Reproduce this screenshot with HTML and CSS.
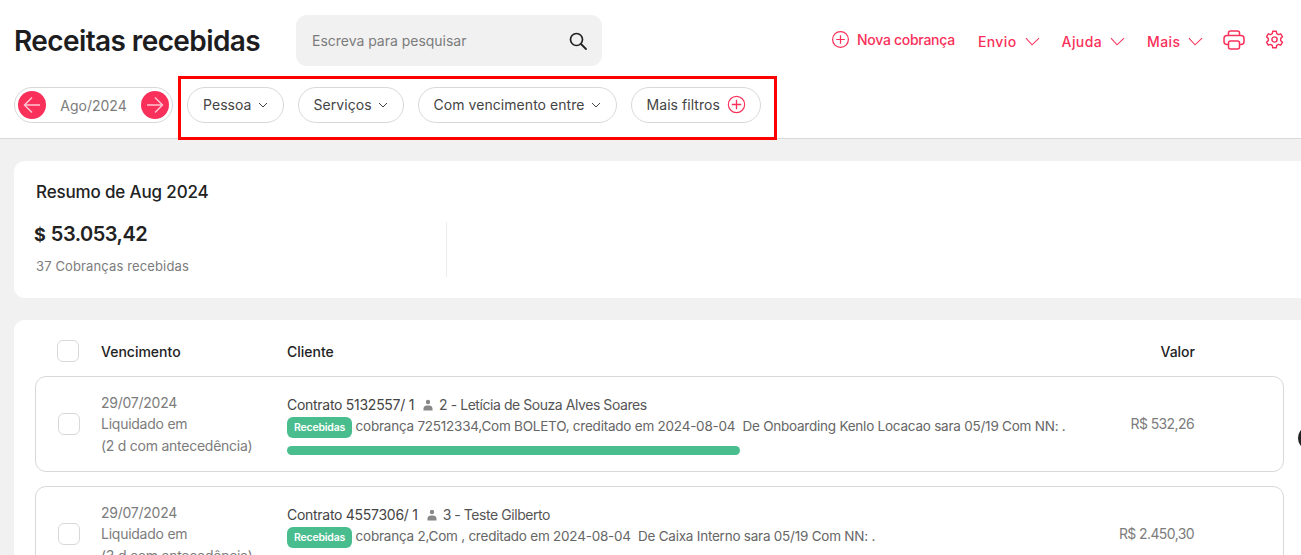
FILE: index.html
```html
<!DOCTYPE html>
<html lang="pt-BR">
<head>
<meta charset="utf-8">
<title>Receitas recebidas</title>
<link rel="stylesheet" href="styles.css">
</head>
<body>
<header class="top">
  <div class="top-row">
    <h1 class="title">Receitas recebidas</h1>
    <div class="search">
      <span class="search-text">Escreva para pesquisar</span>
      <svg class="search-icon" viewBox="0 0 20 20" width="20" height="20"><circle cx="8.500" cy="8.500" r="6" fill="none" stroke="#222" stroke-width="1.700"/><path d="M13 13l5 5" stroke="#222" stroke-width="1.800" stroke-linecap="round"/></svg>
    </div>
    <nav class="nav">
      <a class="nav-new">
        <svg viewBox="0 0 20 20" width="19" height="19"><circle cx="10" cy="10" r="8.300" fill="none" stroke="#f9305a" stroke-width="1.300"/><path d="M10 5.500v9M5.500 10h9" stroke="#f9305a" stroke-width="1.300"/></svg>
        <span class="nav-new-text">Nova cobrança</span>
      </a>
      <a class="nav-item">Envio <svg viewBox="0 0 16 9" width="15" height="9"><path d="M1 1l6.500 7L15 1" fill="none" stroke="#f9305a" stroke-width="1.100"/></svg></a>
      <a class="nav-item">Ajuda <svg viewBox="0 0 16 9" width="15" height="9"><path d="M1 1l6.500 7L15 1" fill="none" stroke="#f9305a" stroke-width="1.100"/></svg></a>
      <a class="nav-item">Mais <svg viewBox="0 0 16 9" width="15" height="9"><path d="M1 1l6.500 7L15 1" fill="none" stroke="#f9305a" stroke-width="1.100"/></svg></a>
      <svg class="nav-print" viewBox="0 0 22 20" width="22" height="20"><path d="M5.500 5.500V3a2 2 0 0 1 2-2h7a2 2 0 0 1 2 2v2.500" fill="none" stroke="#f9305a" stroke-width="1.500"/><path d="M5.500 14.500H4a3 3 0 0 1-3-3V8.500a3 3 0 0 1 3-3h14a3 3 0 0 1 3 3v3a3 3 0 0 1-3 3h-1.500" fill="none" stroke="#f9305a" stroke-width="1.500"/><rect x="5.500" y="11" width="11" height="8" rx="2" fill="none" stroke="#f9305a" stroke-width="1.500"/></svg>
      <svg class="nav-gear" viewBox="0 0 24 24" width="19" height="19" fill="none" stroke="#f9305a" stroke-width="1.800" stroke-linejoin="round"><path d="M9.800 1.500h4.400l.6 3 2.200 1.300 2.900-1 2.200 3.800-2.300 2v2.800l2.300 2-2.200 3.800-2.900-1-2.200 1.300-.6 3H9.800l-.6-3L7 18.200l-2.900 1-2.200-3.800 2.300-2v-2.800l-2.300-2 2.200-3.800 2.900 1 2.200-1.300z"/><circle cx="12" cy="12" r="3.300"/></svg>
    </nav>
  </div>
  <div class="filter-row">
    <div class="month">
      <span class="month-btn"><svg viewBox="0 0 20 20" width="20" height="20"><path d="M18 10H2.500M10 2.500L2.500 10l7.500 7.500" fill="none" stroke="#ffc4d0" stroke-width="1.500"/></svg></span>
      <span class="month-label">Ago/2024</span>
      <span class="month-btn"><svg viewBox="0 0 20 20" width="20" height="20"><path d="M2 10h15.500M10 2.500l7.500 7.500-7.500 7.500" fill="none" stroke="#ffc4d0" stroke-width="1.500"/></svg></span>
    </div>
    <div class="chips">
      <button class="chip">Pessoa <svg viewBox="0 0 10 6" width="10" height="6"><path d="M1 1l4 4 4-4" fill="none" stroke="#444" stroke-width="1"/></svg></button>
      <button class="chip">Serviços <svg viewBox="0 0 10 6" width="10" height="6"><path d="M1 1l4 4 4-4" fill="none" stroke="#444" stroke-width="1"/></svg></button>
      <button class="chip">Com vencimento entre <svg viewBox="0 0 10 6" width="10" height="6"><path d="M1 1l4 4 4-4" fill="none" stroke="#444" stroke-width="1"/></svg></button>
      <button class="chip chip-more">Mais filtros <svg viewBox="0 0 20 20" width="19" height="19"><circle cx="10" cy="10" r="8.600" fill="none" stroke="#f9305a" stroke-width="1.200"/><path d="M10 5v10M5 10h10" stroke="#f9305a" stroke-width="1.400"/></svg></button>
    </div>
  </div>
  <div class="highlight"></div>
</header>

<main class="content">
  <section class="summary">
    <h2 class="summary-title">Resumo de Aug 2024</h2>
    <div class="summary-body">
      <div class="summary-main">
        <div class="amount"><span class="amount-sign">$</span> 53.053,42</div>
        <div class="amount-sub">37 Cobranças recebidas</div>
      </div>
    </div>
  </section>

  <section class="list">
    <div class="list-head">
      <span class="check check-head"></span>
      <span class="col-date">Vencimento</span>
      <span class="col-client">Cliente</span>
      <span class="col-value">Valor</span>
    </div>
    <article class="row">
      <span class="check"></span>
      <div class="col-date date-lines"><p>29/07/2024</p><p>Liquidado em</p><p>(2 d com antecedência)</p></div>
      <div class="col-client">
        <div class="contract">Contrato 5132557/ 1<svg class="person" viewBox="0 0 10 12" width="10" height="12"><circle cx="5" cy="3" r="2.200" fill="#888"/><path d="M0.500 11.500V9a3 3 0 0 1 3-2.500h3A3 3 0 0 1 9.500 9v2.500z" fill="#888"/></svg><span class="contract-name">2 - Letícia de Souza Alves Soares</span></div>
        <div class="desc"><span class="tag">Recebidas</span> cobrança 72512334,Com BOLETO, creditado em 2024-08-04&nbsp; De Onboarding Kenlo Locacao sara 05/19 Com NN: .</div>
        <div class="bar"></div>
      </div>
      <div class="col-value value">R$ 532,26</div>
    </article>
    <article class="row">
      <span class="check"></span>
      <div class="col-date date-lines"><p>29/07/2024</p><p>Liquidado em</p><p>(3 d com antecedência)</p></div>
      <div class="col-client">
        <div class="contract">Contrato 4557306/ 1<svg class="person" viewBox="0 0 10 12" width="10" height="12"><circle cx="5" cy="3" r="2.200" fill="#888"/><path d="M0.500 11.500V9a3 3 0 0 1 3-2.500h3A3 3 0 0 1 9.500 9v2.500z" fill="#888"/></svg><span class="contract-name">3 - Teste Gilberto</span></div>
        <div class="desc"><span class="tag">Recebidas</span> cobrança 2,Com , creditado em 2024-08-04&nbsp; De Caixa Interno sara 05/19 Com NN: .</div>
        <div class="bar bar-hidden"></div>
      </div>
      <div class="col-value value">R$ 2.450,30</div>
    </article>
    <span class="edge-dot"></span>
  </section>
</main>
</body>
</html>
```
FILE: styles.css
```css
* { box-sizing: border-box; }
html, body { margin: 0; height: 555px; overflow: hidden; }
body { font-family: Inter, "Noto Sans", sans-serif; background: #f1f1f1; color: #222; width: 1301px; }

.top { position: relative; height: 139px; background: #fff; border-bottom: 1px solid #d8d8d8; padding: 15px 0 0 14px; }
.top-row { display: flex; align-items: center; height: 51px; }
.title { margin: 0; width: 282px; flex: none; font-size: 28px; font-weight: 600; letter-spacing: -.6px; color: #1d1d1f; white-space: nowrap; }
.search { width: 306px; height: 51px; flex: none; border-radius: 11px; background: #f1f1f1; display: flex; align-items: center; justify-content: space-between; padding: 0 14px 0 16px; }
.search-text { font-size: 14px; color: #7c7c7c; letter-spacing: -.02px; }
.nav { margin-left: 229px; display: flex; align-items: center; color: #f9305a; font-size: 14px; font-weight: 500; }
.nav a { display: flex; align-items: center; }
.nav-new { gap: 7px; margin-right: 23px; margin-top: -2px; }
.nav-new-text { font-size: 14px; letter-spacing: -.28px; }
.nav-item { gap: 8px; margin-right: 22px; letter-spacing: .4px; margin-top: 1px; }
.nav-print { margin-right: 20px; margin-left: -2px; margin-top: -2px; }
.nav-gear { margin-top: -2px; }

.filter-row { display: flex; align-items: center; margin-top: 21px; gap: 14px; }
.month { width: 159px; height: 36px; flex: none; border: 1px solid #d8d8d8; border-radius: 18px; display: flex; align-items: center; justify-content: space-between; padding: 0 3px 0 3px; }
.month-btn { width: 28px; height: 28px; border-radius: 50%; background: #f9305a; display: flex; align-items: center; justify-content: center; }
.month-label { font-size: 14px; color: #7c7c7c; }
.chips { display: flex; gap: 14px; }
.chip { height: 36px; border: 1px solid #d8d8d8; border-radius: 18px; background: #fff; padding: 0 15px 1px; display: flex; align-items: center; gap: 6px; font: 400 14px Inter, sans-serif; color: #444; letter-spacing: .05px; white-space: nowrap; }
.chip-more { padding-right: 14px; gap: 7px; }
.highlight { position: absolute; left: 178px; top: 76px; width: 599px; height: 64px; border: 3px solid #f00; }

.content { padding: 22px 0 0 14px; }
.summary { height: 137px; background: #fff; border-radius: 11px 0 0 11px; padding: 20px 0 0 22px; }
.summary-title { margin: 0; font-size: 17px; line-height: 22px; font-weight: 500; color: #222; letter-spacing: -.15px; }
.summary-body { margin-top: 19px; display: flex; }
.summary-main { width: 411px; height: 55px; border-right: 1px solid #ececec; }
.amount { font-size: 20px; line-height: 26px; font-weight: 600; letter-spacing: -.5px; margin-left: -2px; margin-top: -1px; color: #222; }
.amount-sign { font-size: 18px; font-weight: 700; margin-right: 1px; }
.amount-sub { margin-top: 10px; font-size: 13px; color: #7c7c7c; letter-spacing: .13px; }

.list { position: relative; margin-top: 22px; height: 300px; background: #fff; border-radius: 11px 0 0 0; padding-left: 21px; }
.list-head { display: flex; align-items: center; height: 56px; padding-top: 6px; font-size: 14px; font-weight: 500; color: #222; }
.check { flex: none; width: 22px; height: 22px; margin-left: 22px; border: 1px solid #d8d8d8; border-radius: 6px; background: #fff; }
.col-date { width: 186px; margin-left: 22px; flex: none; }
.col-client { flex: 1; min-width: 0; }
.col-value { width: 100px; text-align: right; flex: none; }
.list-head .col-value { margin-right: 106px; }
.row { display: flex; align-items: center; width: 1249px; height: 96px; border: 1px solid #d8d8d8; border-radius: 11px; margin-bottom: 14px; }
.row .check { margin-left: 22px; }
.row .col-date { margin-left: 21px; }
.date-lines { font-size: 14px; line-height: 21.500px; color: #7c7c7c; letter-spacing: -.25px; white-space: nowrap; }
.date-lines p { margin: 0; }
.row .col-client { padding-top: 2px; }
.contract { font-size: 14px; line-height: 20px; color: #444; letter-spacing: -.28px; display: flex; align-items: center; white-space: nowrap; }
.contract-name { letter-spacing: -.44px; color: #555; }
.person { margin: 0 6px 0 9px; flex: none; }
.desc { font-size: 13.500px; line-height: 21px; height: 21px; color: #666; letter-spacing: -.23px; margin-top: 1px; white-space: nowrap; }
.tag { display: inline-block; width: 65px; height: 21px; line-height: 21px; text-align: center; border-radius: 6px; background: #49bd8d; color: #fff; font-size: 10.500px; font-weight: 600; letter-spacing: -.2px; }
.bar { width: 453px; height: 9px; border-radius: 5px; background: #49bd8d; margin-top: 9px; }
.bar-hidden { visibility: hidden; }
.row .col-value { margin-right: 89px; margin-top: -2px; }
.value { font-size: 14px; color: #7c7c7c; letter-spacing: -.6px; }
.edge-dot { position: absolute; right: -12px; top: 108px; width: 15px; height: 20px; border-radius: 50%; background: #222; }
```
